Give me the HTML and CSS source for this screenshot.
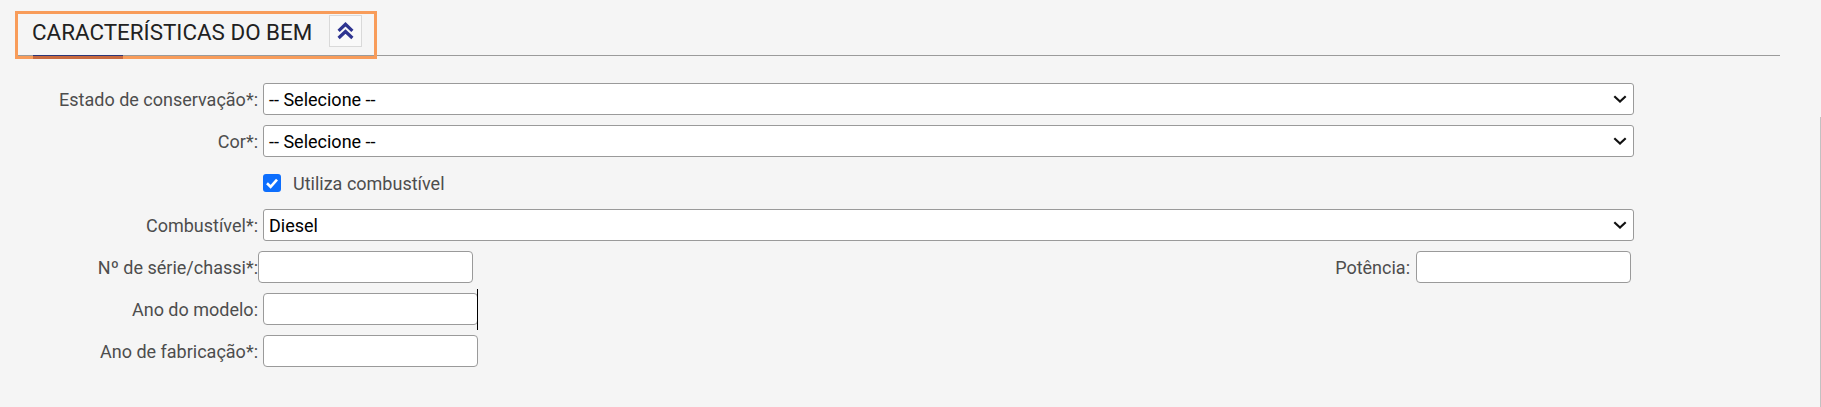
FILE: index.html
```html
<!DOCTYPE html>
<html lang="pt-BR">
<head>
<meta charset="utf-8">
<title>Características do bem</title>
<link rel="stylesheet" href="styles.css">
</head>
<body>
<div class="page">
  <div class="section-head">
    <div class="head-box">
      <h2 class="head-title">CARACTERÍSTICAS DO BEM</h2>
      <button class="collapse-btn" type="button" aria-label="Recolher">
        <svg width="17" height="18" viewBox="0 0 17 18"><polyline points="1.6,8.8 8.5,2.3 15.4,8.8" fill="none" stroke="#2e3490" stroke-width="3.2" stroke-linejoin="miter"/><polyline points="1.6,16 8.5,9.5 15.4,16" fill="none" stroke="#2e3490" stroke-width="3.2" stroke-linejoin="miter"/></svg>
      </button>
      <span class="tab-underline"></span>
    </div>
  </div>

  <div class="form">
    <div class="row">
      <label class="label">Estado de conservação*:</label>
      <div class="select"><span>-- Selecione --</span><svg width="14" height="8" viewBox="0 0 14 8"><polyline points="1.3,1.3 7,6.5 12.7,1.3" fill="none" stroke="#111" stroke-width="2.2"/></svg></div>
    </div>
    <div class="row">
      <label class="label">Cor*:</label>
      <div class="select"><span>-- Selecione --</span><svg width="14" height="8" viewBox="0 0 14 8"><polyline points="1.3,1.3 7,6.5 12.7,1.3" fill="none" stroke="#111" stroke-width="2.2"/></svg></div>
    </div>
    <div class="row row--check">
      <span class="checkbox"><svg width="18" height="18" viewBox="0 0 18 18"><polyline points="4,9.3 7.6,12.8 14,5.6" fill="none" stroke="#fff" stroke-width="2.6"/></svg></span>
      <span class="check-text">Utiliza combustível</span>
    </div>
    <div class="row">
      <label class="label">Combustível*:</label>
      <div class="select"><span>Diesel</span><svg width="14" height="8" viewBox="0 0 14 8"><polyline points="1.3,1.3 7,6.5 12.7,1.3" fill="none" stroke="#111" stroke-width="2.2"/></svg></div>
    </div>
    <div class="row row--split">
      <label class="label">Nº de série/chassi*:</label>
      <input class="input input--tight" type="text">
      <div class="right-group">
        <label class="label-inline">Potência:</label>
        <input class="input input--power" type="text">
      </div>
    </div>
    <div class="row">
      <label class="label">Ano do modelo:</label>
      <input class="input" type="text">
      <span class="caret"></span>
    </div>
    <div class="row">
      <label class="label">Ano de fabricação*:</label>
      <input class="input" type="text">
    </div>
  </div>
  <div class="scroll-edge"></div>
</div>
</body>
</html>
```

FILE: styles.css
```css
html, body {
  margin: 0;
  padding: 0;
  height: 100%;
}
body {
  background: #f5f5f5;
  font-family: Roboto, "Liberation Sans", Arial, sans-serif;
  color: #222;
}
.page {
  position: relative;
  min-height: 100%;
}
.section-head {
  display: flex;
  align-items: flex-start;
  height: 55px;
  margin: 0 41px 0 15px;
  border-bottom: 1px solid #9b9b9b;
}
.head-box {
  position: relative;
  display: flex;
  align-items: flex-start;
  box-sizing: border-box;
  width: 362px;
  height: 48px;
  margin-top: 11px;
  padding-left: 14px;
  border: 3px solid #f89c5a;
}
.head-title {
  margin: 0;
  padding-top: 5px;
  font-size: 22.4px;
  font-weight: 400;
  color: #212121;
  line-height: normal;
}
.collapse-btn {
  display: flex;
  align-items: center;
  justify-content: center;
  box-sizing: border-box;
  width: 33px;
  height: 32px;
  margin: 1px 0 0 17px;
  padding: 0;
  background: #f9f9f9;
  border: 1px solid #d9d9d9;
  border-radius: 0;
}
.tab-underline {
  position: absolute;
  left: 15px;
  top: 41px;
  width: 90px;
  height: 3px;
  border-top: 1px solid #2c3778;
  background: #c8693e;
}
.form {
  display: flex;
  flex-direction: column;
  gap: 10px;
  margin-top: 27px;
}
.row {
  display: flex;
  align-items: center;
  height: 32px;
}
.label {
  flex: none;
  width: 258px;
  text-align: right;
  font-size: 18px;
  color: #4d4d4d;
}
.select {
  display: flex;
  align-items: center;
  justify-content: space-between;
  box-sizing: border-box;
  width: 1371px;
  height: 32px;
  margin-left: 5px;
  padding: 0 6px 0 5px;
  background: #fff;
  border: 1px solid #9a9a9a;
  border-radius: 3px;
  font-size: 18px;
  color: #000;
}
.input {
  box-sizing: border-box;
  width: 215px;
  height: 32px;
  margin: 0 0 0 5px;
  padding: 0 5px;
  background: #fff;
  border: 1px solid #9a9a9a;
  border-radius: 4px;
  font: inherit;
  font-size: 18px;
}
.input--tight { margin-left: 0; }
.input--power { margin-left: 6px; }
.row--split { width: 1631px; }
.right-group {
  display: flex;
  align-items: center;
  margin-left: auto;
}
.label-inline {
  font-size: 18px;
  color: #4d4d4d;
}
.caret {
  flex: none;
  width: 1px;
  height: 41px;
  margin-left: -1px;
  background: #000;
}
.row--check {
  padding-left: 263px;
}
.checkbox {
  display: flex;
  box-sizing: border-box;
  width: 18px;
  height: 18px;
  border-radius: 3px;
  background: #0d6efd;
}
.check-text {
  margin-left: 12px;
  font-size: 18px;
  color: #4d4d4d;
}
.scroll-edge {
  position: absolute;
  right: 0;
  top: 117px;
  bottom: 0;
  width: 1px;
  background: #c2c2c2;
}
```
